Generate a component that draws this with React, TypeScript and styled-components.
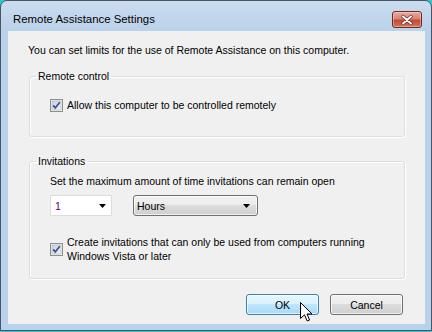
import React from 'react';
import styled, { createGlobalStyle } from 'styled-components';

const Global = createGlobalStyle`
  html, body { margin: 0; padding: 0; background: #2cc6d6; }
  body {
    width: 432px; height: 332px; overflow: hidden;
    font-family: "Liberation Sans", Arial, sans-serif;
    font-size: 10.5px; color: #000;
  }
`;

const Window = styled.div`
  position: relative;
  box-sizing: border-box;
  width: 432px;
  height: 331px;
  border: 1px solid #4a5563;
  border-radius: 7px 7px 0 0;
  background: linear-gradient(#cbdcef, #b9d1ea 30px, #b9d1ea);
  display: flex;
  flex-direction: column;
  padding: 0 6px 6px 7px;
`;

const TitleBar = styled.div`
  height: 30px;
  display: flex;
  align-items: flex-start;
  justify-content: space-between;
  padding-left: 5px;
`;

const Title = styled.span`
  margin-top: 11px;
  font-size: 11.4px;
  line-height: 15px;
  color: #000;
`;

const CloseBtn = styled.div`
  box-sizing: border-box;
  margin-top: 10px;
  margin-right: 3px;
  width: 30px;
  height: 17px;
  border: 1px solid #6d2a20;
  border-radius: 3px;
  background: linear-gradient(#e8ab9c, #d98371 45%, #c34a34 55%, #d1735b);
  box-shadow: inset 0 0 0 1px rgba(255,255,255,0.35);
  display: flex;
  align-items: center;
  justify-content: center;
`;

const Client = styled.div`
  flex: 1;
  background: #f0f0f0;
  padding: 12px 20px 9px 20px;
  display: flex;
  flex-direction: column;
`;

const Text = styled.div<{ $lh?: number }>`
  font-size: 10.5px;
  white-space: nowrap;
  line-height: ${(p) => p.$lh ?? 15}px;
`;

const Group = styled.fieldset<{ $pt: number; $pb: number; $mt: number }>`
  margin: ${(p) => p.$mt}px 0 0 1px;
  padding: ${(p) => p.$pt}px 0 ${(p) => p.$pb}px 20px;
  border: 1px solid #d5dfe5;
  border-radius: 3px;
  box-shadow: inset 1px 1px 0 #fff, 1px 1px 0 #fff;
  min-width: 0;
`;

const Legend = styled.legend`
  padding: 0 2px;
  margin-left: -14px;
  font-size: 10.5px;
  line-height: 15px;
`;

const CheckRow = styled.div`
  display: flex;
  align-items: center;
  gap: 4px;
`;

const ComboRow = styled.div`
  display: flex;
  gap: 21px;
  margin-top: 6px;
`;

const Combo = styled.div<{ $w: number; $button?: boolean }>`
  box-sizing: border-box;
  width: ${(p) => p.$w}px;
  height: 21px;
  display: flex;
  align-items: center;
  justify-content: space-between;
  padding: 0 ${(p) => (p.$button ? 7 : 5)}px 0 ${(p) => (p.$button ? 3 : 4)}px;
  border: 1px solid ${(p) => (p.$button ? '#707070' : '#dcdcdc')};
  border-radius: ${(p) => (p.$button ? 3 : 1)}px;
  background: ${(p) =>
    p.$button
      ? 'linear-gradient(#f2f2f2, #ebebeb 50%, #dddddd 50%, #cfcfcf)'
      : '#fff'};
  box-shadow: ${(p) => (p.$button ? 'inset 0 0 0 1px rgba(255,255,255,0.7)' : 'none')};
  font-size: 10.5px;
`;

const ComboValue = styled.span<{ $c?: string }>`
  color: ${(p) => p.$c ?? '#000'};
`;

const CheckSecond = styled(CheckRow)`
  margin-top: 19px;
`;

const Buttons = styled.div`
  margin-top: auto;
  display: flex;
  justify-content: flex-end;
  gap: 11px;
  padding-right: 2px;
`;

const Button = styled.div<{ $hot?: boolean }>`
  box-sizing: border-box;
  width: 73px;
  height: 21px;
  display: flex;
  align-items: center;
  justify-content: center;
  font-size: 10.5px;
  border: 1px solid ${(p) => (p.$hot ? '#3c7fb1' : '#707070')};
  border-radius: 3px;
  background: ${(p) =>
    p.$hot
      ? 'linear-gradient(#eaf6fd, #d9f0fc 50%, #bee6fd 50%, #a7d9f5)'
      : 'linear-gradient(#f2f2f2, #ebebeb 50%, #dddddd 50%, #cfcfcf)'};
  box-shadow: inset 0 0 0 1px rgba(255,255,255,0.7);
`;

const Cursor = styled.svg`
  position: absolute;
  left: 299px;
  top: 301px;
`;

function Arrow() {
  return (
    <svg width="7" height="4" viewBox="0 0 7 4">
      <path d="M0 0 H7 L3.5 4 Z" fill="#000" />
    </svg>
  );
}

function CheckBox() {
  return (
    <svg width="13" height="13" viewBox="0 0 13 13">
      <defs>
        <linearGradient id="cb" x1="0" y1="0" x2="1" y2="1">
          <stop offset="0" stopColor="#cbcfd5" />
          <stop offset="1" stopColor="#f4f4f6" />
        </linearGradient>
      </defs>
      <rect x="0.5" y="0.5" width="12" height="12" fill="#f4f4f4" stroke="#8e8f8f" />
      <rect x="2" y="2" width="9" height="9" fill="url(#cb)" stroke="#aeb3b9" strokeWidth="0.6" />
      <path d="M3.2 6.4 L5.3 8.8 L9.8 3.2" fill="none" stroke="#3f5690" strokeWidth="1.8" />
    </svg>
  );
}

export default function App() {
  return (
    <>
      <Global />
      <Window>
        <TitleBar>
          <Title>Remote Assistance Settings</Title>
          <CloseBtn>
            <svg width="12" height="10" viewBox="0 0 12 10">
              <path d="M2 1.5 L10 8.5 M10 1.5 L2 8.5" stroke="#5a1f16" strokeWidth="3.2" strokeLinecap="round" />
              <path d="M2 1.5 L10 8.5 M10 1.5 L2 8.5" stroke="#fff" strokeWidth="2" strokeLinecap="round" />
            </svg>
          </CloseBtn>
        </TitleBar>
        <Client>
          <Text>You can set limits for the use of Remote Assistance on this computer.</Text>
          <Group $mt={11} $pt={14} $pb={23}>
            <Legend>Remote control</Legend>
            <CheckRow>
              <CheckBox />
              <Text>Allow this computer to be controlled remotely</Text>
            </CheckRow>
          </Group>
          <Group $mt={17} $pt={5} $pb={15}>
            <Legend>Invitations</Legend>
            <Text>Set the maximum amount of time invitations can remain open</Text>
            <ComboRow>
              <Combo $w={62}>
                <ComboValue $c="#5a0070">1</ComboValue>
                <Arrow />
              </Combo>
              <Combo $w={125} $button>
                <ComboValue>Hours</ComboValue>
                <Arrow />
              </Combo>
            </ComboRow>
            <CheckSecond>
              <CheckBox />
              <Text $lh={14}>
                Create invitations that can only be used from computers running
                <br />
                Windows Vista or later
              </Text>
            </CheckSecond>
          </Group>
          <Buttons>
            <Button $hot>OK</Button>
            <Button>Cancel</Button>
          </Buttons>
        </Client>
        <Cursor width="14" height="22" viewBox="0 0 14 22">
          <path d="M0.5 0.5 L0.5 16.5 L4.5 12.8 L7.2 19 L9.6 18 L7 12 L12 12 Z" fill="#fff" stroke="#000" strokeWidth="1" strokeLinejoin="round" />
        </Cursor>
      </Window>
    </>
  );
}
